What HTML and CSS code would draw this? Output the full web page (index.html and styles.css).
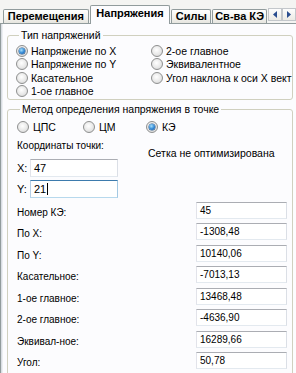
FILE: index.html
```html
<!DOCTYPE html>
<html lang="ru">
<head>
    <meta charset="UTF-8">
    <title>Напряжения</title>
    <link rel="stylesheet" href="styles.css">
</head>
<body>
    <div class="tabbar">
        <div class="tab tab1">Перемещения</div>
        <div class="tab tab2 active">Напряжения</div>
        <div class="tab tab3">Силы</div>
        <div class="tab tab4">Св-ва КЭ</div>
        <div class="scroll">
            <span class="arrowBtn">
                <svg width="4" height="7" viewBox="0 0 4 7"><path d="M4 0 L0 3.5 L4 7 Z" fill="#2a4d8f"/></svg>
            </span>
            <span class="arrowBtn">
                <svg width="4" height="7" viewBox="0 0 4 7"><path d="M0 0 L4 3.5 L0 7 Z" fill="#2a4d8f"/></svg>
            </span>
        </div>
    </div>

    <div class="page">
        <fieldset class="group groupType">
            <legend>Тип напряжений</legend>
            <div class="typeGrid">
                <div class="opt"><span class="radio on"></span>Напряжение по X</div>
                <div class="opt"><span class="radio"></span>Напряжение по Y</div>
                <div class="opt"><span class="radio"></span>Касательное</div>
                <div class="opt"><span class="radio"></span>1-ое главное</div>
                <div class="opt"><span class="radio"></span>2-ое главное</div>
                <div class="opt"><span class="radio"></span>Эквивалентное</div>
                <div class="opt"><span class="radio"></span>Угол наклона к оси X вект</div>
            </div>
        </fieldset>

        <fieldset class="group groupMethod">
            <legend>Метод определения напряжения в точке</legend>
            <div class="methods">
                <div class="opt"><span class="radio"></span>ЦПС</div>
                <div class="opt"><span class="radio"></span>ЦМ</div>
                <div class="opt"><span class="radio on"></span>КЭ</div>
            </div>
            <div class="coords">
                <div class="coordsLeft">
                    <div class="caption">Координаты точки:</div>
                    <div class="xyRow">
                        <span class="xyLabel">X:</span>
                        <div class="box xyBox">47</div>
                    </div>
                    <div class="xyRow">
                        <span class="xyLabel">Y:</span>
                        <div class="box xyBox focus">21<span class="caret"></span></div>
                    </div>
                </div>
                <div class="meshNote">Сетка не оптимизирована</div>
            </div>
            <div class="values">
                <div class="valLabel">Номер КЭ:</div><div class="box">45</div>
                <div class="valLabel">По X:</div><div class="box">-1308,48</div>
                <div class="valLabel">По Y:</div><div class="box">10140,06</div>
                <div class="valLabel">Касательное:</div><div class="box">-7013,13</div>
                <div class="valLabel">1-ое главное:</div><div class="box">13468,48</div>
                <div class="valLabel">2-ое главное:</div><div class="box">-4636,90</div>
                <div class="valLabel">Эквивал-ное:</div><div class="box">16289,66</div>
                <div class="valLabel">Угол:</div><div class="box">50,78</div>
            </div>
        </fieldset>
    </div>
</body>
</html>
```

FILE: styles.css
```css
*{
    padding: 0;
    margin: 0;
    box-sizing: border-box;
}
body{
    width: 296px;
    height: 373px;
    overflow: hidden;
    background: #f4f4f2;
    font-family: "Liberation Sans", Arial, sans-serif;
    font-size: 10px;
    color: #000;
}

/* вкладки */
.tabbar{
    position: relative;
    z-index: 1;
    display: flex;
    align-items: flex-end;
    height: 23px;
    padding-left: 3px;
}
.tab{
    height: 14px;
    margin-right: 1px;
    border: 1px solid #919b9c;
    border-bottom: 0;
    border-radius: 2px 2px 0 0;
    background: linear-gradient(#ffffff, #f3f3ef 60%, #e6e5df);
    font-size: 11px;
    font-weight: bold;
    line-height: 13px;
    text-align: center;
    white-space: nowrap;
}
.tab1{ width: 86px; }
.tab2{ width: 81px; }
.tab3{ width: 40px; }
.tab4{ width: 55px; }
.tab.active{
    height: 19px;
    margin-bottom: -1px;
    background: #fcfcfe;
    line-height: 15px;
}
.scroll{
    display: flex;
    align-self: flex-start;
    margin-top: 8px;
}
.arrowBtn{
    display: flex;
    align-items: center;
    justify-content: center;
    width: 14px;
    height: 13px;
    border: 1px solid #c3c7cb;
    background: linear-gradient(#fdfdfd, #eceae4);
}

/* страница */
.page{
    height: 350px;
    padding: 5px 0 0 6px;
    border-top: 1px solid #919b9c;
    border-left: 1px solid #919b9c;
    box-shadow: inset 1px 0 #d9dde3, inset 2px 0 #eceff2;
    background: #fcfcfe;
}
.group{
    width: 286px;
    border: 1px solid #d0d0bf;
    border-radius: 3px;
}
.group legend{
    margin-left: 3px;
    padding: 0 2px;
    font-size: 10.5px;
    line-height: 13px;
}
.groupType{
    padding: 2px 0 2px 8px;
}
.groupMethod{
    margin-top: 3px;
    padding: 4px 0 20px 9px;
}

.opt{
    display: flex;
    align-items: center;
    height: 13px;
    font-size: 10.5px;
    white-space: nowrap;
    overflow: hidden;
}
.radio{
    position: relative;
    flex: none;
    width: 12px;
    height: 12px;
    margin-right: 3px;
    border: 1px solid #8e8f8f;
    border-radius: 50%;
    background: radial-gradient(circle at 45% 40%, #ffffff, #e8e8e8 55%, #cfcfcf);
}
.radio.on::after{
    content: "";
    position: absolute;
    left: 2px;
    top: 2px;
    width: 6px;
    height: 6px;
    border-radius: 50%;
    background: radial-gradient(circle at 40% 35%, #a8e0fb, #2f86d4 55%, #174e96);
    box-shadow: 0 0 0 0.5px #1f4f80;
}

.typeGrid{
    display: grid;
    grid-template-columns: 135px 1fr;
    grid-template-rows: 13px 14px 13px 13px;
    grid-auto-flow: column;
    overflow: hidden;
}

.methods{
    display: grid;
    grid-template-columns: 66px 63px 1fr;
}
.methods .opt .radio{
    margin-right: 4px;
}

.coords{
    display: grid;
    grid-template-columns: 131px 1fr;
    margin-top: 6px;
}
.caption{
    line-height: 13px;
}
.xyRow{
    display: flex;
    align-items: center;
    margin-top: 7px;
}
.xyRow + .xyRow{
    margin-top: 3px;
}
.xyLabel{
    width: 13px;
    font-size: 11px;
}
.meshNote{
    margin-top: 8px;
    font-size: 10.5px;
    line-height: 13px;
    white-space: nowrap;
}

.box{
    height: 17px;
    padding: 0 3px;
    border: 1px solid;
    border-color: #abadb3 #dbdfe6 #e3e9ef #e2e3ea;
    background: #fff;
    line-height: 15px;
    white-space: nowrap;
}
.xyBox{
    width: 88px;
    height: 18px;
    font-size: 11px;
    line-height: 16px;
}
.box.focus{
    border-color: #3d7bad #a4c9e3 #b7d9ed #b5cfe7;
}
.caret{
    display: inline-block;
    width: 1px;
    height: 12px;
    margin-left: 1px;
    background: #000;
    vertical-align: -2px;
}

.values{
    display: grid;
    grid-template-columns: 179px 91px;
    grid-auto-rows: 17px;
    row-gap: 4.43px;
    margin-top: 4px;
}
.valLabel{
    padding-top: 4px;
    line-height: 13px;
    white-space: nowrap;
}
```
